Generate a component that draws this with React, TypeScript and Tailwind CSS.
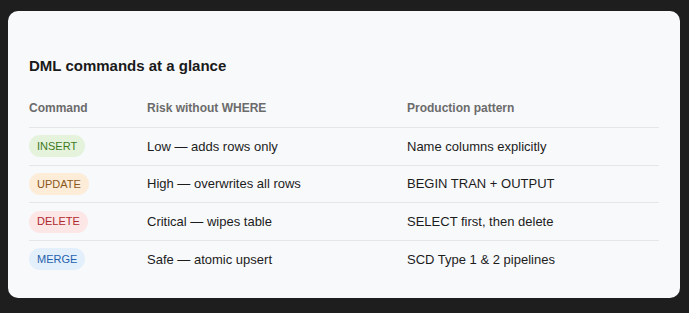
import React from "react";

const rows = [
  {
    cmd: "INSERT",
    badge: "bg-[#e5f3dc] text-[#3d7a1c]",
    risk: "Low — adds rows only",
    pattern: "Name columns explicitly",
  },
  {
    cmd: "UPDATE",
    badge: "bg-[#fcecd8] text-[#8a561a]",
    risk: "High — overwrites all rows",
    pattern: "BEGIN TRAN + OUTPUT",
  },
  {
    cmd: "DELETE",
    badge: "bg-[#fce6e6] text-[#b0282c]",
    risk: "Critical — wipes table",
    pattern: "SELECT first, then delete",
  },
  {
    cmd: "MERGE",
    badge: "bg-[#e4effc] text-[#2462ad]",
    risk: "Safe — atomic upsert",
    pattern: "SCD Type 1 & 2 pipelines",
  },
];

export default function App() {
  return (
    <div
      className="min-h-screen bg-[#1e1e1e] pt-[11px] pl-[8px] pr-[9px] pb-[15px]"
      style={{ fontFamily: '"Liberation Sans", Arial, sans-serif' }}
    >
      <div className="rounded-[10px] bg-[#f8f9fb] px-[21px] pt-[45px] pb-[20px]">
        <h2 className="text-[15px] leading-[20px] font-bold text-[#1a1a1a] mb-[24px]">
          DML commands at a glance
        </h2>
        <div className="grid grid-cols-[118px_260px_1fr] text-[12px] leading-[16px] font-bold text-[#6b6b6b] pb-[11px]">
          <div>Command</div>
          <div>Risk without WHERE</div>
          <div>Production pattern</div>
        </div>
        {rows.map((r) => (
          <div
            key={r.cmd}
            className="grid grid-cols-[118px_260px_1fr] items-center h-[37.67px] border-t border-[#e4e6ea] text-[13px] text-[#1c1c1c]"
          >
            <div>
              <span
                className={`inline-flex items-center h-[22px] px-[8px] rounded-full text-[11px] ${r.badge}`}
              >
                {r.cmd}
              </span>
            </div>
            <div>{r.risk}</div>
            <div>{r.pattern}</div>
          </div>
        ))}
      </div>
    </div>
  );
}
